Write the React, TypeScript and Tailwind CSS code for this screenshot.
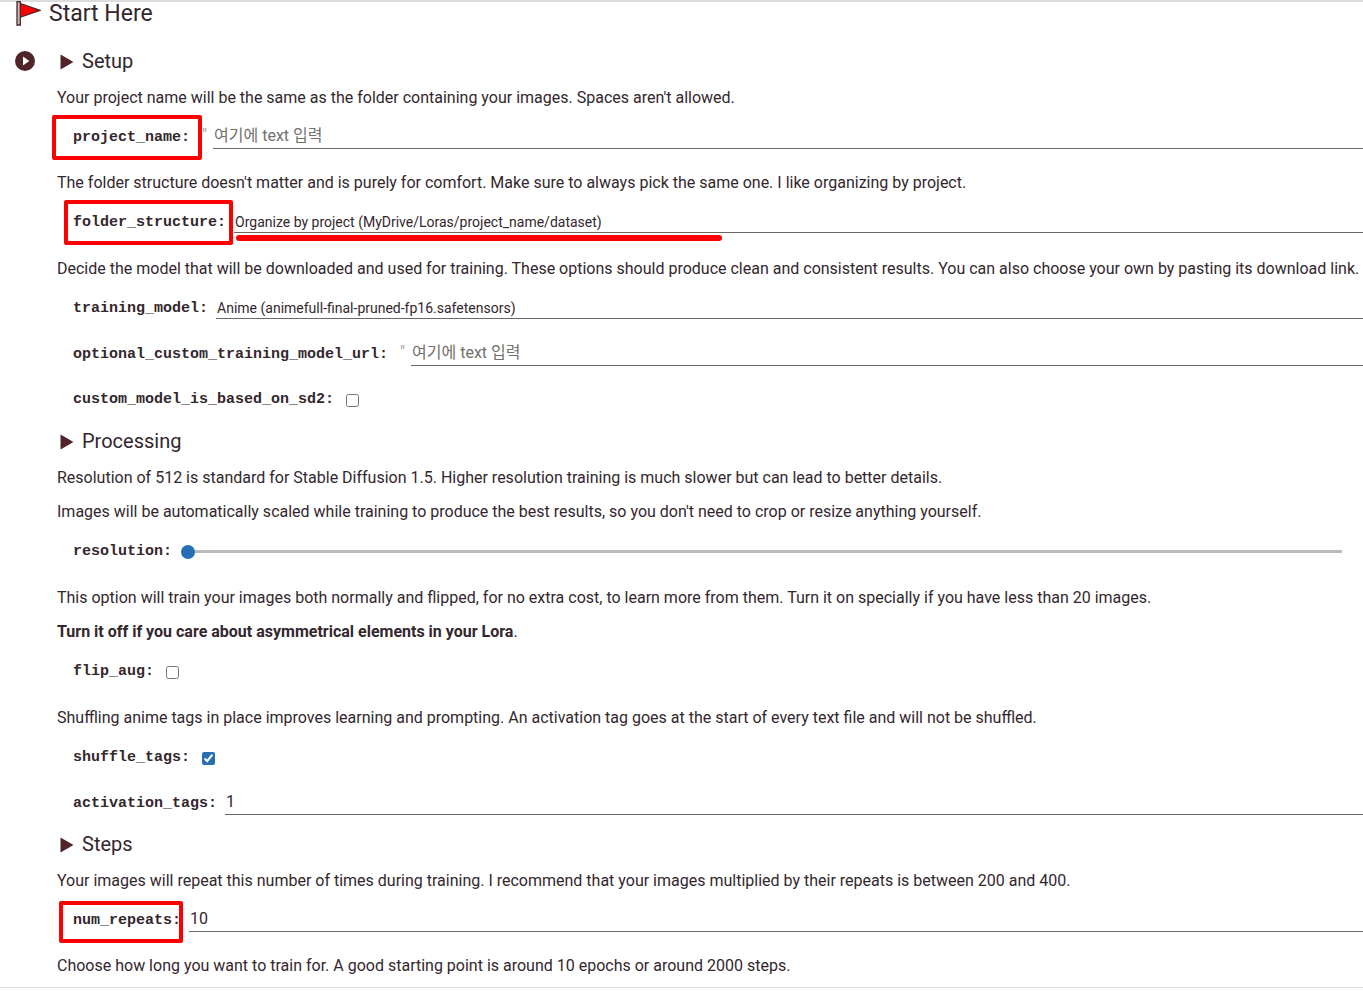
import type { ReactNode } from 'react'

const lineClass =
    'block h-7 w-full appearance-none rounded-none border-0 border-b border-[#6b6765] bg-transparent p-0 outline-none'

function SectionTitle({ children }: { children: ReactNode }) {
    return (
        <h2 className="flex h-8 items-center gap-2 pl-[3px] text-xl">
            <svg className="mt-px" width="14" height="16" viewBox="0 0 14 16" fill="#4f2529" aria-hidden="true">
                <path d="M.5 .5L13.5 8L.5 15.5Z" />
            </svg>
            {children}
        </h2>
    )
}

function Note({ children }: { children: ReactNode }) {
    return <div className="flex flex-col gap-2.5 pt-[9px] pb-[7px] text-base leading-6 whitespace-nowrap">{children}</div>
}

interface LabelProps {
    name: string
    // red frame drawn around the label
    mark?: string
}

function FieldLabel({ name, mark }: LabelProps) {
    return (
        <label
            htmlFor={name}
            className="relative flex h-10 shrink-0 items-center pt-0.5 font-['Liberation_Mono',monospace] text-[15px] font-bold"
        >
            {name}:
            {mark && <span className={`pointer-events-none absolute rounded-xs border-4 border-[#ff0000] ${mark}`} />}
        </label>
    )
}

interface TextFieldProps extends LabelProps {
    value?: string
    placeholder?: string
}

function TextField({ name, mark, value, placeholder }: TextFieldProps) {
    return (
        <div className="flex h-[45px] items-start pl-4">
            <FieldLabel name={name} mark={mark} />
            {placeholder && <span className="ml-3 w-[3px] pt-1.5 text-base text-[#a5a1a0]">"</span>}
            <div className="ml-2 min-w-0 grow pt-1">
                <input
                    id={name}
                    type="text"
                    defaultValue={value}
                    placeholder={placeholder}
                    className={`${lineClass} pt-0.5 pl-px text-base placeholder:text-[#72706c]`}
                />
            </div>
        </div>
    )
}

interface SelectFieldProps extends LabelProps {
    option: string
    underline?: boolean
}

function SelectField({ name, mark, option, underline }: SelectFieldProps) {
    return (
        <div className="flex h-[46px] items-start pl-4">
            <FieldLabel name={name} mark={mark} />
            <div className="relative ml-2 min-w-0 grow pt-[3px]">
                <select id={name} className={`${lineClass} pt-1.5 pl-px text-sm`}>
                    <option>{option}</option>
                </select>
                {underline && (
                    <span className="pointer-events-none absolute top-[33px] left-0.5 h-1.5 w-[486px] rounded-full bg-[#ff0000]" />
                )}
            </div>
        </div>
    )
}

function CheckField({ name, checked }: { name: string; checked?: boolean }) {
    return (
        <div className="flex h-[46px] items-start pl-4">
            <FieldLabel name={name} />
            <input
                id={name}
                type="checkbox"
                defaultChecked={checked}
                className="mt-[15px] ml-3 size-[13px] accent-[#266fb5]"
            />
        </div>
    )
}

function SliderField({ name }: { name: string }) {
    return (
        <div className="flex h-[46px] items-start pr-[21px] pl-4">
            <FieldLabel name={name} />
            <input
                id={name}
                type="range"
                min={512}
                max={1024}
                step={128}
                defaultValue={512}
                className="mt-[13px] ml-[9px] h-3.5 min-w-0 grow appearance-none bg-transparent [&::-webkit-slider-runnable-track]:h-[3px] [&::-webkit-slider-runnable-track]:bg-[#bbbbbb] [&::-webkit-slider-thumb]:-mt-[5px] [&::-webkit-slider-thumb]:size-3.5 [&::-webkit-slider-thumb]:appearance-none [&::-webkit-slider-thumb]:rounded-full [&::-webkit-slider-thumb]:bg-[#266fb5]"
            />
        </div>
    )
}

export default function App() {
    return (
        <div className="overflow-hidden bg-white font-[Roboto,'Noto_Sans_CJK_KR',sans-serif] text-[#33272d]">
            <header className="flex h-[26px] items-center gap-2 border-t-2 border-[#dcdcdc] pl-4">
                <svg className="-mt-0.5 shrink-0" width="25" height="26" viewBox="0 0 25 26" aria-hidden="true">
                    <path d="M3 3L24 10.3L3 17.5Z" fill="#ff0000" stroke="#4f2529" strokeWidth="1.3" />
                    <path d="M1 1.7H4.3V25H1Z" fill="#c4c0be" stroke="#4f2529" strokeWidth="1.3" />
                </svg>
                <h1 className="text-[23px] leading-6">Start Here</h1>
            </header>

            <main className="mt-[19px] flex border-b border-[#dddddd] pb-0.5">
                <div className="w-[57px] shrink-0 pt-1.5 pl-[15px]">
                    <button type="button" aria-label="Run cell" className="block cursor-pointer">
                        <svg width="20" height="20" viewBox="0 0 20 20">
                            <circle cx="10" cy="10" r="10" fill="#4f2529" />
                            <path d="M8 5.5V14.5L14.3 10Z" fill="#fff" />
                        </svg>
                    </button>
                </div>

                <div className="min-w-0 grow">
                    <SectionTitle>Setup</SectionTitle>
                    <Note>
                        <p>Your project name will be the same as the folder containing your images. Spaces aren't allowed.</p>
                    </Note>
                    <TextField name="project_name" placeholder="여기에 text 입력" mark="-top-0.5 -left-[21px] -right-3 h-[45px]" />
                    <Note>
                        <p>
                            The folder structure doesn't matter and is purely for comfort. Make sure to always pick the same one. I
                            like organizing by project.
                        </p>
                    </Note>
                    <SelectField
                        name="folder_structure"
                        option="Organize by project (MyDrive/Loras/project_name/dataset)"
                        mark="-top-0.5 -left-[9px] -right-[7px] h-[45px]"
                        underline
                    />
                    <Note>
                        <p>
                            Decide the model that will be downloaded and used for training. These options should produce clean and
                            consistent results. You can also choose your own by pasting its download link.
                        </p>
                    </Note>
                    <SelectField name="training_model" option="Anime (animefull-final-pruned-fp16.safetensors)" />
                    <TextField name="optional_custom_training_model_url" placeholder="여기에 text 입력" />
                    <CheckField name="custom_model_is_based_on_sd2" />

                    <SectionTitle>Processing</SectionTitle>
                    <Note>
                        <p>
                            Resolution of 512 is standard for Stable Diffusion 1.5. Higher resolution training is much slower but can
                            lead to better details.
                        </p>
                        <p>
                            Images will be automatically scaled while training to produce the best results, so you don't need to crop
                            or resize anything yourself.
                        </p>
                    </Note>
                    <SliderField name="resolution" />
                    <Note>
                        <p>
                            This option will train your images both normally and flipped, for no extra cost, to learn more from them.
                            Turn it on specially if you have less than 20 images.
                        </p>
                        <p>
                            <strong className="font-bold">Turn it off if you care about asymmetrical elements in your Lora</strong>.
                        </p>
                    </Note>
                    <CheckField name="flip_aug" />
                    <Note>
                        <p>
                            Shuffling anime tags in place improves learning and prompting. An activation tag goes at the start of
                            every text file and will not be shuffled.
                        </p>
                    </Note>
                    <CheckField name="shuffle_tags" checked />
                    <TextField name="activation_tags" value="1" />

                    <SectionTitle>Steps</SectionTitle>
                    <Note>
                        <p>
                            Your images will repeat this number of times during training. I recommend that your images multiplied by
                            their repeats is between 200 and 400.
                        </p>
                    </Note>
                    <TextField name="num_repeats" value="10" mark="top-px -left-3.5 -right-0.5 h-[42px]" />
                    <Note>
                        <p>Choose how long you want to train for. A good starting point is around 10 epochs or around 2000 steps.</p>
                    </Note>
                </div>
            </main>
        </div>
    )
}
